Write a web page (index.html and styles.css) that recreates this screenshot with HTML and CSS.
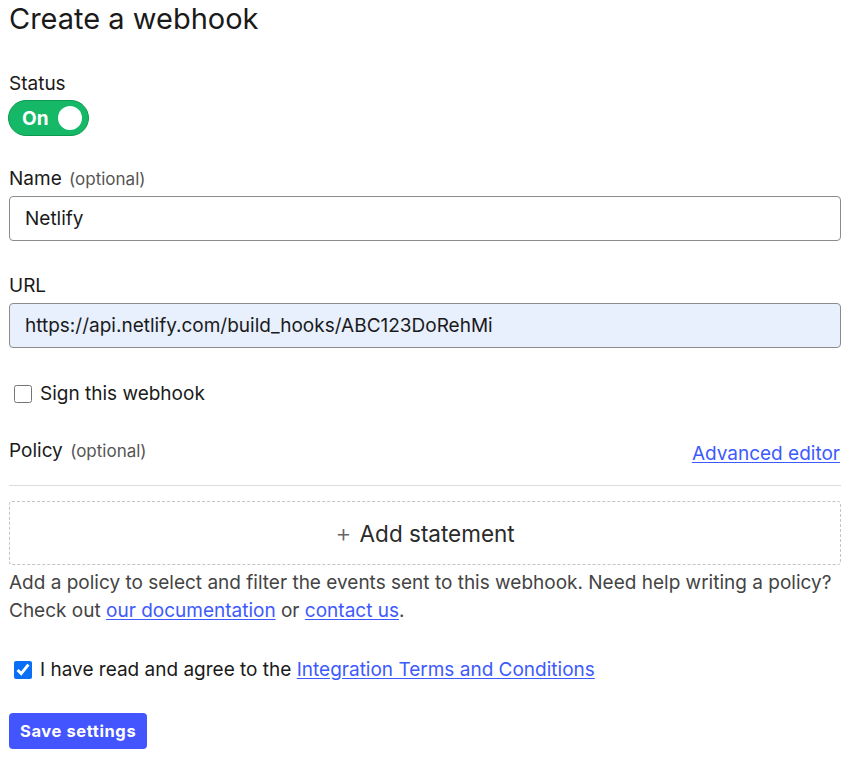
FILE: index.html
```html
<!DOCTYPE html>
<html>
<head>
<meta charset="utf-8">
<link rel="stylesheet" href="styles.css">
</head>
<body>
<div class="page">
  <h1 class="title">Create a webhook</h1>

  <div class="field status-field">
    <div class="label">Status</div>
    <div class="toggle">
      <span class="toggle-text">On</span>
      <span class="knob"></span>
    </div>
  </div>

  <div class="field">
    <div class="label">Name <span class="optional">(optional)</span></div>
    <div class="input">Netlify</div>
  </div>

  <div class="field url-field">
    <div class="label">URL</div>
    <div class="input autofill">https://api.netlify.com/build_hooks/ABC123DoRehMi</div>
  </div>

  <label class="check-row sign-row">
    <input type="checkbox" class="check">
    <span>Sign this webhook</span>
  </label>

  <div class="policy-head">
    <div class="label">Policy <span class="optional">(optional)</span></div>
    <a class="link adv" href="#">Advanced editor</a>
  </div>
  <div class="divider"></div>

  <div class="add-statement"><span class="plus">+</span> Add statement</div>

  <p class="help">Add a policy to select and filter the events sent to this webhook. Need help writing a policy? Check out <a class="link" href="#">our documentation</a> or <a class="link" href="#">contact us</a>.</p>

  <label class="check-row terms-row">
    <input type="checkbox" class="check" checked>
    <span>I have read and agree to the <a class="link" href="#">Integration Terms and Conditions</a></span>
  </label>

  <button class="save">Save settings</button>
</div>
</body>
</html>
```

FILE: styles.css
```css
html, body {
  margin: 0;
  padding: 0;
  background: #fff;
}
body {
  font-family: Inter, "Noto Sans", sans-serif;
  color: #1a1a1a;
  font-size: 19px;
}
.page {
  padding: 0 9px;
  width: 832px;
}
.title {
  margin: 2px 0 0;
  font-size: 29px;
  font-weight: 400;
  line-height: 34px;
  color: #1a1a1a;
}
.field {
  display: flex;
  flex-direction: column;
}
.status-field {
  margin-top: 36px;
}
.label {
  font-size: 19px;
  line-height: 24px;
  color: #1a1a1a;
}
.optional {
  font-size: 17px;
  color: #555;
  margin-left: 2px;
}
.toggle {
  margin-top: 4px;
  width: 81px;
  height: 36px;
  box-sizing: border-box;
  border-radius: 18px;
  background: #14b866;
  border: 1px solid #0c9a50;
  display: flex;
  align-items: center;
  justify-content: space-between;
  padding: 0 6px 0 13px;
  margin-left: -1px;
}
.toggle-text {
  color: #fff;
  font-weight: 700;
  font-size: 19px;
}
.knob {
  width: 24px;
  height: 24px;
  border-radius: 50%;
  background: #fff;
}
.status-field + .field {
  margin-top: 31px;
}
.url-field {
  margin-top: 33px;
}
.input {
  margin-top: 5px;
  height: 45px;
  box-sizing: border-box;
  border: 1px solid #8c8c8c;
  border-radius: 4px;
  padding: 0 15px;
  display: flex;
  align-items: center;
  font-size: 19px;
  color: #1a1a1a;
}
.autofill {
  background: #e8f0fe;
}
.check-row {
  display: flex;
  align-items: center;
  gap: 8px;
  font-size: 19px;
  line-height: 24px;
  padding-left: 5px;
}
.check {
  margin: 0;
  width: 18px;
  height: 18px;
  accent-color: #0b6ff5;
}
.sign-row {
  margin-top: 34px;
}
.policy-head {
  margin-top: 33px;
  display: flex;
  justify-content: space-between;
  align-items: flex-start;
}
.link {
  color: #3d5afe;
  text-decoration: underline;
  text-underline-offset: 2px;
}
.adv {
  margin-top: 3px;
  font-size: 19px;
  line-height: 24px;
  margin-right: 1px;
}
.divider {
  margin-top: 19px;
  height: 1px;
  background: #dcdcdc;
}
.add-statement {
  margin-top: 15px;
  height: 64px;
  box-sizing: border-box;
  border: 1px dashed #c4c4c4;
  border-radius: 3px;
  display: flex;
  align-items: center;
  justify-content: center;
  font-size: 22.5px;
  color: #2a2a2a;
}
.plus {
  color: #666;
  font-weight: 300;
  font-size: 25px;
  margin-right: 8px;
}
.help {
  margin: 4px 0 0;
  font-size: 19px;
  line-height: 28px;
  color: #444;
}
.terms-row {
  margin-top: 33px;
  color: #1a1a1a;
}
.save {
  margin-top: 31px;
  display: block;
  height: 36px;
  padding: 0 11px;
  border: none;
  border-radius: 4px;
  background: #4355ff;
  color: #fff;
  font-family: Inter, "Noto Sans", sans-serif;
  font-weight: 700;
  font-size: 16.5px;
  letter-spacing: 0.6px;
}
```
